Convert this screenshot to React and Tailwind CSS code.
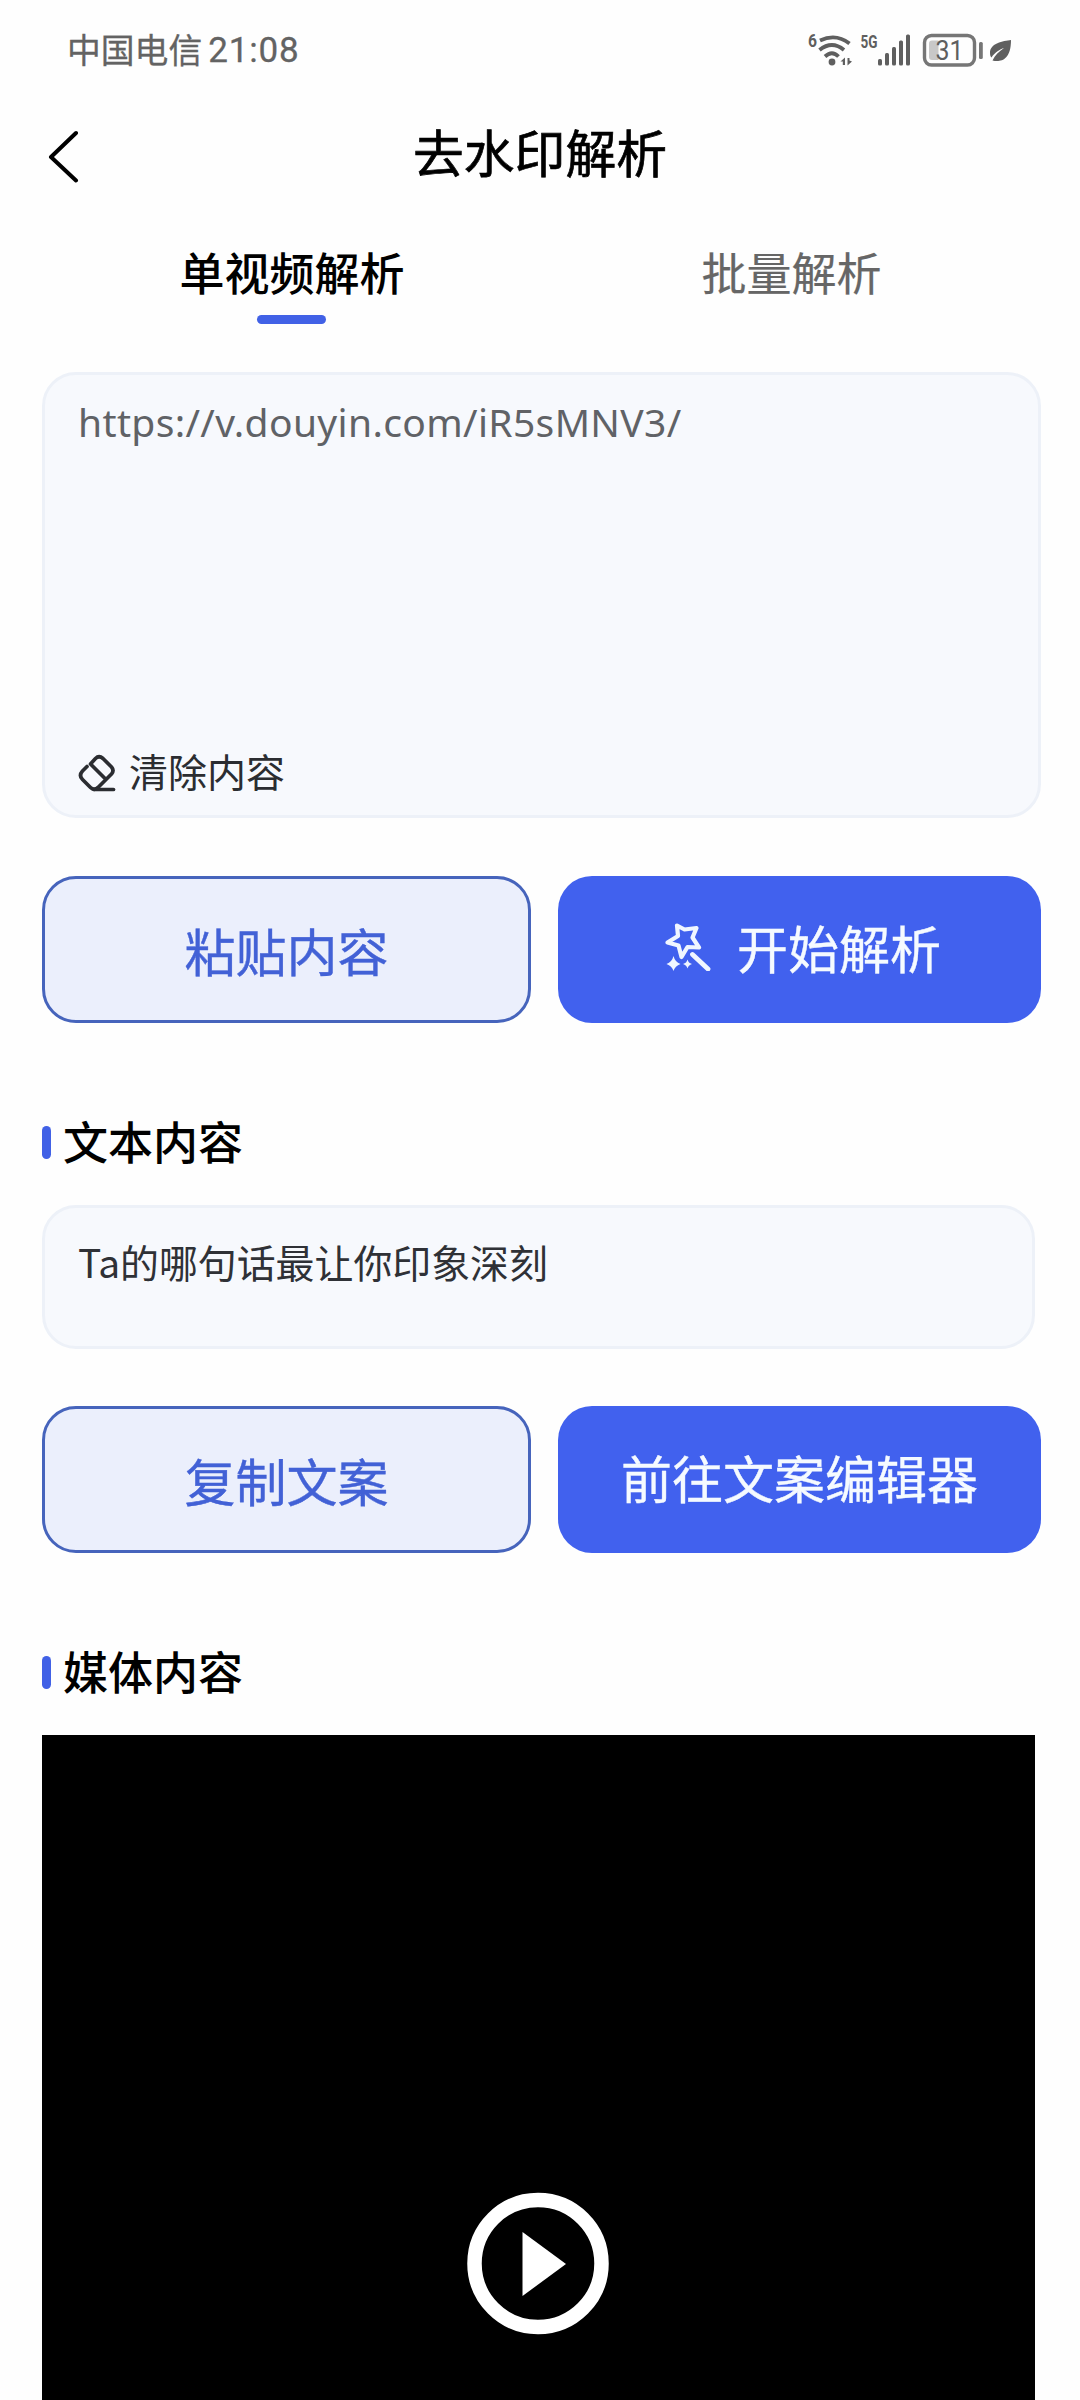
import React from 'react';

const StatusIcons = () => (
  <svg className="w-[210px] h-10" viewBox="805 30 210 40" fill="#5f5f5f">
    <text x="808" y="47" fontSize="18" fontWeight="700" textLength="9" lengthAdjust="spacingAndGlyphs" className="font-['Roboto',sans-serif]">6</text>
    <g fill="none" stroke="#5f5f5f" strokeWidth="3.8">
      <path d="M820 40.5 Q836 33 849.5 43.5" />
      <path d="M819.5 50 Q832 40 844 50" />
      <path d="M825 56.5 Q832 50 838.5 56.5" />
    </g>
    <circle cx="832" cy="62" r="3.4" />
    <path d="M840.5 61.5 L845 57.5 V65 H842.8 V61.5 Z M847.5 58 H849.5 V60.5 L852 61.5 L847.5 65.5 Z" />
    <text x="860.5" y="48" fontSize="18" fontWeight="700" textLength="17" lengthAdjust="spacingAndGlyphs" className="font-['Roboto',sans-serif]">5G</text>
    <rect x="878" y="59" width="4" height="6.5" rx="1.5" />
    <rect x="885" y="53" width="4" height="12.5" rx="1.5" />
    <rect x="892" y="47" width="4" height="18.5" rx="1.5" />
    <rect x="899" y="40.5" width="4" height="25" rx="1.5" />
    <rect x="906" y="34.5" width="4" height="31" rx="1.5" />
    <rect x="924.5" y="35.5" width="50" height="29.5" rx="7" fill="none" stroke="#767676" strokeWidth="3.4" />
    <path d="M932 40.5 H938.5 V60 H932 Q929 60 929 57 V43.5 Q929 40.5 932 40.5 Z" fill="#c8c8c8" />
    <text x="935.5" y="60" fontSize="27" textLength="28" lengthAdjust="spacingAndGlyphs" className="font-['Roboto',sans-serif]">31</text>
    <rect x="979" y="42" width="3.8" height="17" rx="1.5" fill="#767676" />
    <path d="M1011 40 C1003 41 990 43 990 53 C990 56 991 57 991.5 57.5 C995 52 1000 49.5 1004 48 C999 51.5 995 55 992.5 60.5 C999 62 1011 62 1011 40 Z" />
  </svg>
);

const EraserIcon = () => (
  <svg className="w-[38px] h-[38px] -mt-0.5" viewBox="0 0 38 38" fill="none" stroke="#2b2d31" strokeWidth="3.7" strokeLinecap="round" strokeLinejoin="round">
    <path d="M9 12.5 L4.5 17 Q0.5 21.5 4.5 25.5 L12.5 33.5 Q16 37 20 33.5 L33.5 20 Q36.5 16.5 33.5 13 L25 4.5 Q21 1 17.5 4.5 L12.5 10 L27 24.5" />
    <path d="M16 35.5 H35.5" />
  </svg>
);

const WandIcon = () => (
  <svg className="w-[46px] h-12" viewBox="0 0 46 48" fill="none" stroke="#f0f6ff" strokeWidth="4.2" strokeLinecap="round" strokeLinejoin="round">
    <path d="M12 2.5 L19.5 6.5 L31.5 5 L27.5 14.5 L34 24.5 L22.5 24 L16.5 34 L13.5 22.5 L2.5 19.5 L13 13 Z" />
    <path d="M27.5 31.5 L43 46" strokeWidth="4.8" />
    <path d="M8.5 33 Q10 39 15.5 41 Q10 43 8.5 48 Q7 43 1.5 41 Q7 39 8.5 33 Z" fill="#f0f6ff" stroke="none" />
    <path d="M22.5 36.5 Q23.3 40 27 41 Q23.3 42 22.5 45.5 Q21.7 42 18 41 Q21.7 40 22.5 36.5 Z" fill="#f0f6ff" stroke="none" />
  </svg>
);

const SectionTitle = ({ children }) => (
  <h2 className="flex items-center h-[66px] font-medium text-[45px] leading-[66px] text-black">
    <span className="w-[9px] h-[33px] mr-3 rounded-full bg-[#4161e6]" />
    <span className="-mt-[3px]">{children}</span>
  </h2>
);

const OutlineButton = ({ children }) => (
  <button className="w-[489px] h-[147px] rounded-[34px] border-3 border-[#4664bc] bg-[#ebeffc] text-[#4261d6] text-[51px] leading-[76px] [-webkit-text-stroke:0.4px]">
    {children}
  </button>
);

const PrimaryButton = ({ icon, children }) => (
  <button className="flex items-center justify-center w-[483px] h-[147px] pb-1.5 rounded-[34px] bg-[#4161ee] text-[#f5faff] text-[51px] leading-[76px] [-webkit-text-stroke:0.4px]">
    {icon && <span className="ml-[7px] mr-[26px] mt-px">{icon}</span>}
    {children}
  </button>
);

const App = () => {
  return (
    <div className="w-[1080px] h-[2400px] overflow-hidden bg-[#fefefe] flex flex-col font-['Noto_Sans_CJK_SC',sans-serif]">
      <div className="flex items-center justify-between h-[100px] pl-[67px] pr-[65px] text-[#636363]">
        <div className="flex items-center text-[33.8px] [-webkit-text-stroke:0.3px]">
          <span className="-mt-0.5">中国电信</span>
          <span className="ml-[6px] mt-0.5 text-[35px] tracking-[0.8px] font-['Roboto',sans-serif]">21:08</span>
        </div>
        <StatusIcons />
      </div>

      <header className="grid grid-cols-[100px_1fr_100px] items-center h-[110px]">
        <svg className="w-8 h-[54px] mt-0.5 ml-[47px]" viewBox="0 0 32 54" fill="none" stroke="#000" strokeWidth="4" strokeLinecap="round" strokeLinejoin="round">
          <path d="M29 4 L4 28 L29 51.5" />
        </svg>
        <h1 className="-mt-2 text-center text-[50.8px] leading-[76px] text-black [-webkit-text-stroke:0.7px]">去水印解析</h1>
      </header>

      <nav className="flex h-[162px] px-[42px] pt-[28px]">
        <div className="flex flex-col items-center w-[502px] pl-0.5">
          <span className="font-medium text-[45px] leading-[67px] text-black">单视频解析</span>
          <span className="w-[69px] h-[9px] mt-[10px] rounded-full bg-[#4161e6]" />
        </div>
        <div className="w-[502px] pl-[5px] text-center text-[45px] leading-[67px] text-[#666] [-webkit-text-stroke:0.2px]">批量解析</div>
      </nav>

      <main className="flex flex-col pl-[42px]">
        <div className="flex flex-col justify-between w-[999px] h-[446px] px-[33px] pt-[19px] pb-[18px] rounded-[34px] border-3 border-[#edf1f8] bg-[#f7f9fd]">
          <p className="text-[39px] leading-[56px] tracking-[0.35px] text-[#606266] font-['Noto_Sans',sans-serif]">https://v.douyin.com/iR5sMNV3/</p>
          <div className="flex items-center h-[54px] text-[39px] leading-[54px] text-[#2b2d31]">
            <span className="mt-[7px]"><EraserIcon /></span>
            <span className="ml-[13px]">清除内容</span>
          </div>
        </div>

        <div className="flex gap-[27px] mt-[58px]">
          <OutlineButton>粘贴内容</OutlineButton>
          <PrimaryButton icon={<WandIcon />}>开始解析</PrimaryButton>
        </div>

        <div className="mt-[86px]">
          <SectionTitle>文本内容</SectionTitle>
        </div>
        <div className="w-[993px] h-[144px] mt-[30px] px-[33px] pt-[24px] rounded-[34px] border-3 border-[#edf1f8] bg-[#f7f9fd] text-[38.9px] leading-[58px] text-[#2f3136]">
          Ta的哪句话最让你印象深刻
        </div>

        <div className="flex gap-[27px] mt-[57px]">
          <OutlineButton>复制文案</OutlineButton>
          <PrimaryButton>前往文案编辑器</PrimaryButton>
        </div>

        <div className="mt-[86px]">
          <SectionTitle>媒体内容</SectionTitle>
        </div>
        <div className="w-[993px] h-[665px] mt-[30px] pl-[424px] pt-[456px] bg-black">
          <svg className="w-[144px] h-[144px]" viewBox="0 0 144 144">
            <circle cx="72" cy="72.5" r="63.5" fill="none" stroke="#fff" strokeWidth="14.5" />
            <path d="M56.5 41 L100 73 L56.5 105 Z" fill="#fff" />
          </svg>
        </div>
      </main>
    </div>
  );
};

export default App;
